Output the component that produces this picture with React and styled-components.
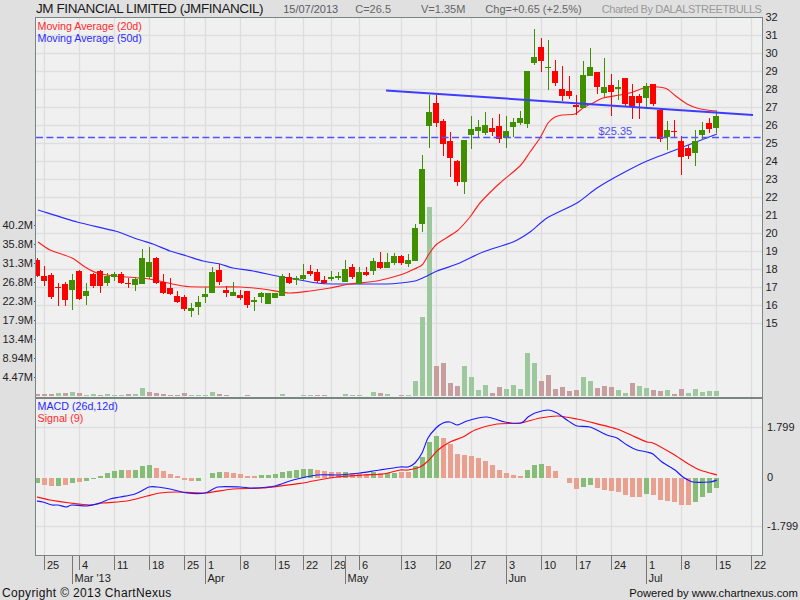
import React from "react";
import styled, { createGlobalStyle } from "styled-components";

const Global = createGlobalStyle`
  html, body { margin: 0; padding: 0; background: #e0e0e0; }
`;

const font = `"Liberation Sans", Arial, sans-serif`;
const GREEN = "#3f8f00";
const RED = "#ff0000";

/* [high, bodyTop, bodyBottom, low, colour] in pixel rows of the picture */
const candles = [
  [258,260,276,277,"r"],[266,276,281,286,"r"],[273,275,297,299,"r"],[283,287,288,306,"r"],[282,284,300,306,"r"],
  [274,280,290,310,"g"],[270,271,299,300,"r"],[283,291,296,305,"g"],[273,274,286,288,"r"],[270,271,286,293,"r"],
  [273,276,283,286,"g"],[272,274,277,281,"g"],[272,274,283,284,"r"],[278,283,284,288,"r"],[277,279,285,291,"g"],
  [249,258,284,284,"g"],[247,262,277,279,"g"],[257,258,283,284,"r"],[274,282,293,294,"r"],[278,288,294,295,"r"],
  [291,296,302,303,"r"],[295,297,309,311,"r"],[303,308,311,317,"g"],[296,302,307,315,"g"],[287,294,297,303,"g"],
  [267,272,293,293,"g"],[264,270,282,285,"r"],[286,290,293,297,"r"],[282,292,296,296,"g"],[290,295,298,300,"r"],
  [291,291,305,308,"r"],[297,300,302,311,"g"],[292,293,297,303,"g"],[293,293,304,304,"g"],[293,293,298,298,"g"],
  [274,276,296,296,"g"],[273,277,283,284,"r"],[276,278,280,285,"g"],[264,275,279,280,"g"],[265,271,274,276,"r"],
  [269,272,281,283,"r"],[276,280,283,284,"r"],[271,277,279,281,"g"],[272,276,278,280,"g"],[260,269,282,282,"g"],
  [264,267,277,279,"r"],[267,272,284,284,"g"],[267,272,275,276,"r"],[258,261,271,275,"g"],[252,262,268,269,"r"],
  [253,262,268,268,"g"],[253,256,263,265,"g"],[255,256,263,265,"r"],[254,260,264,267,"g"],[224,228,261,261,"g"],
  [155,169,224,232,"g"],[95,112,126,148,"g"],[95,103,123,127,"r"],[119,121,144,156,"r"],[132,141,158,177,"r"],
  [160,161,182,186,"r"],[140,140,182,194,"g"],[116,129,135,149,"g"],[120,127,131,137,"g"],[112,125,133,135,"g"],
  [118,128,132,136,"r"],[114,126,139,143,"r"],[116,131,138,148,"g"],[118,122,127,137,"g"],[111,118,123,125,"g"],
  [71,71,124,128,"g"],[29,57,63,65,"g"],[38,47,61,72,"r"],[40,67,68,90,"g"],[60,71,83,86,"r"],
  [66,89,96,101,"r"],[76,91,96,99,"r"],[95,105,107,115,"r"],[61,75,108,108,"g"],[48,67,76,76,"g"],
  [72,72,87,94,"r"],[58,87,93,97,"g"],[74,85,92,116,"r"],[80,87,89,100,"g"],[78,78,104,106,"r"],
  [84,96,107,119,"r"],[94,96,103,119,"r"],[83,86,98,107,"g"],[84,84,104,106,"r"],[109,110,139,142,"r"],
  [121,130,137,150,"g"],[120,131,132,138,"r"],[136,141,157,175,"r"],[145,148,156,159,"r"],[130,141,153,166,"g"],
  [122,130,135,140,"g"],[118,123,129,133,"r"],[111,116,128,133,"g"],
];

/* volume bar height in px, colour */
const volumes = "2r 2r 2r 3g 3r 4g 3r 1g 2g 1r 2g 1g 1g 2r 2g 8g 4r 3r 2r 1r 1r 3r 1g 1g 1g 4g 2r 1r 0g 0g 1r 0g 0g 0g 0g 2g 0g 0g 1g 1g 1r 1r 0g 0g 2g 1g 1g 0g 4g 3r 2g 0g 1r 1g 15g 79g 189g 30r 33r 13r 10r 30g 19g 6g 11g 3r 9r 7g 11g 7g 43g 33g 15r 21r 7r 9r 5r 6r 19g 15g 8r 10r 9r 6g 3g 13r 10g 8g 6r 5r 6g 2r 7r 3g 7g 4g 5g 5g"
  .split(" ").map((s) => [parseInt(s, 10), s.slice(-1)]);

/* MACD histogram height in px above the zero line, colour */
const histogram = "-5g -7r -8r -8g -7r -5g -4r -3g -1g 2g 5g 7g 8g 8r 8g 12g 13g 10r 7r 4r 2r -2r -3r -3g 0.5g 5g 6g 6r 5r 4r 2.5r 2.5r 3.5g 3g 4g 6g 7g 8g 9g 9g 8r 7r 6r 6r 6g 5r 5r 4r 6g 5r 5g 5g 6r 6r 12g 21g 36g 42g 40r 34r 24r 23r 22r 20r 17r 13r 8r 5r 3r 2r 8g 13g 14g 12r 7r 0.5r -5r -11r -9g -7g -10r -12r -13r -14r -17r -19r -19r -16g -17r -22r -23r -24r -27r -27r -24g -19g -15g -10g"
  .split(" ").map((s) => [parseFloat(s), s.slice(-1)]);

const ma20 = "38,242 50,250 72,258 85,267 97,273 115,276 149,279 183,286 203,287 240,287 263,289 289,293 310,291 330,288 350,284 377,281 400,275 410,271 422,265 429,254 437,244 457,231 470,217 480,203 500,183 520,166 530,152 540,138 548,123 555,117 562,115 575,114 583,108 593,103 603,98 620,95 633,92 647,87 658,87 667,89 677,97 687,104 697,108 707,110 717,111";
const ma50 = "38,210 77,222 115,231 137,239 153,244 170,251 187,256 203,261 220,264 233,268 253,271 277,276 300,280 317,283 333,284 360,284 387,284 400,283 415,281 427,276 437,271 457,264 483,252 513,242 530,232 547,218 577,203 597,188 623,173 647,161 683,147 717,134";
const macd = "37,501 43,502 52,505 58,505 66,507 72,505 87,506 100,503 110,499 120,497 135,494 149,487 157,487 170,489 187,493 205,493 218,487 240,487 253,488 275,486 293,480 317,475 338,475 360,473 373,471 380,470 400,467 408,467 415,463 422,453 428,438 436,428 443,423 450,422 457,425 467,421 478,418 487,417 495,419 505,422 521,423 528,417 535,413 548,410 557,413 567,420 577,426 590,427 607,435 617,438 627,445 637,450 647,452 653,454 662,462 675,470 683,477 693,482 710,482 717,480";
const signal = "37,497 50,500 70,503 90,505 103,503 127,501 147,496 160,493 177,492 205,493 233,489 263,488 303,483 313,481 337,477 363,475 383,474 400,470 408,470 420,467 428,461 438,450 450,442 463,437 475,430 497,424 520,423 540,418 558,416 577,419 590,422 617,429 633,436 647,442 653,443 673,454 687,463 700,470 717,475";

/* Catmull-Rom through the read points, so the averages bend as smoothly as in the chart */
const smooth = (text) => {
  const p = text.split(" ").map((s) => s.split(",").map(Number));
  let d = `M${p[0][0]} ${p[0][1]}`;
  for (let i = 0; i < p.length - 1; i++) {
    const a = p[Math.max(i - 1, 0)], b = p[i], c = p[i + 1], e = p[Math.min(i + 2, p.length - 1)];
    const k = 0.12;
    d += `C${(b[0] + (c[0] - a[0]) * k).toFixed(1)} ${(b[1] + (c[1] - a[1]) * k).toFixed(1)} ${(c[0] - (e[0] - b[0]) * k).toFixed(1)} ${(c[1] - (e[1] - b[1]) * k).toFixed(1)} ${c[0]} ${c[1]}`;
  }
  return d;
};

const gridX = [44,79,114,149,184,205,240,275,303,331,359,401,436,471,506,541,576,611,646,681,716,751];
const priceGridY = Array.from({ length: 17 }, (_, i) => 35 + i * 18);

const days = [
  [44,"25"],[79,"4"],[114,"11"],[149,"18"],[184,"25"],[205,"1"],[240,"8"],[275,"15"],[303,"22"],[331,"29"],[359,"6"],
  [401,"13"],[436,"20"],[471,"27"],[506,"3"],[541,"10"],[576,"17"],[611,"24"],[646,"1"],[681,"8"],[716,"15"],[751,"22"],
];
const months = [[72,"Mar '13"],[205,"Apr"],[345,"May"],[506,"Jun"],[646,"Jul"]];

const Page = styled.div`
  width: 800px;
  height: 600px;
  background: #e0e0e0;
  font-family: ${font};
  overflow: hidden;
  display: flex;
  flex-direction: column;
`;
const TitleBar = styled.header`
  height: 17px;
  padding-left: 36px;
  display: flex;
  align-items: center;
  white-space: nowrap;
`;
const Title = styled.span`
  font-size: 13.5px;
  color: #1a1a1a;
  letter-spacing: -0.42px;
`;
const Stat = styled.span`
  font-size: 11px;
  color: ${(p) => p.$color};
  margin-left: ${(p) => p.$gap}px;
`;
const Credit = styled(Stat)`
  letter-spacing: -0.42px;
`;
const ChartRow = styled.div`
  display: flex;
  height: 539px;
`;
const LeftAxis = styled.div`
  width: 35px;
  padding-top: 199px;
  box-sizing: border-box;
  display: flex;
  flex-direction: column;
`;
const VolumeLabel = styled.div`
  position: relative;
  height: 19px;
  line-height: 19px;
  font-size: 11px;
  color: #222;
  text-align: right;
  padding-right: 1.5px;
  white-space: nowrap;
  &::after {
    content: "";
    position: absolute;
    right: 0;
    top: 9px;
    width: 1px;
    height: 1px;
    background: #555;
  }
`;
const Panes = styled.div`
  width: 726px;
  border: 1px solid #7a8683;
  display: flex;
  flex-direction: column;
  background: #f0f0f0;
`;
const PricePane = styled.div`
  position: relative;
  height: 379px;
  border-bottom: 2px solid #7a8683;
`;
const MacdPane = styled.div`
  position: relative;
  height: 156px;
`;
const Plot = styled.svg`
  display: block;
`;
const Legend = styled.div`
  position: absolute;
  left: 2px;
  top: ${(p) => p.$top}px;
  display: flex;
  flex-direction: column;
  font-size: 10.7px;
  line-height: 12px;
`;
const LegendRow = styled.span`
  color: ${(p) => p.$color};
  white-space: nowrap;
`;
const PriceNote = styled.span`
  position: absolute;
  left: 563px;
  top: 107px;
  font-size: 11px;
  line-height: 13px;
  color: #4f4fee;
`;
const RightAxis = styled.div`
  width: 38px;
  padding-left: 3px;
  box-sizing: border-box;
  display: flex;
  flex-direction: column;
`;
const PriceScale = styled.div`
  height: 381px;
  margin-top: -9px;
  display: flex;
  flex-direction: column;
`;
const PriceLabel = styled.div`
  height: 18px;
  line-height: 18px;
  font-size: 11px;
  color: #222;
`;
const MacdScale = styled.div`
  margin-top: 14px;
  padding-left: 1.5px;
  display: flex;
  flex-direction: column;
`;
const MacdLabel = styled.div`
  height: 49.5px;
  line-height: 49.5px;
  font-size: 11px;
  color: #222;
  white-space: nowrap;
`;
const TimeAxis = styled.div`
  position: relative;
  height: 28px;
`;
const DayMark = styled.span`
  position: absolute;
  top: 0;
  height: 14px;
  padding-left: 2px;
  border-left: 1px solid #777;
  font-size: 11px;
  line-height: 18px;
  color: #222;
  white-space: nowrap;
`;
const MonthMark = styled.span`
  position: absolute;
  top: 0;
  height: 28px;
  padding: 15px 0 0 1.5px;
  box-sizing: border-box;
  border-left: 1px solid #777;
  font-size: 11px;
  line-height: 14px;
  color: #222;
  white-space: nowrap;
`;
const Footer = styled.footer`
  height: 16px;
  padding: 1px 2px 0;
  box-sizing: border-box;
  display: flex;
  justify-content: space-between;
  align-items: center;
  color: #111;
`;
const Copyright = styled.span`
  font-size: 12px;
  letter-spacing: 0.35px;
`;
const Powered = styled.span`
  font-size: 11.25px;
`;

const Grid = ({ rows, top, bottom }) => (
  <g stroke="#dedede" strokeWidth="1.4">
    {gridX.map((x) => <line key={x} x1={x + 0.5} x2={x + 0.5} y1={top} y2={bottom} />)}
    {rows.map((y) => <line key={y} x1="36" x2="762" y1={y + 0.5} y2={y + 0.5} />)}
  </g>
);

const Curve = ({ points, color, width = 1.15 }) => (
  <path d={smooth(points)} fill="none" stroke={color} strokeWidth={width} strokeLinejoin="round" />
);

const centre = (i) => 37 + 7 * i;

const PriceChart = () => (
  <Plot width="726" height="379" viewBox="36 18 726 379">
    <Grid rows={priceGridY} top={18} bottom={397} />
    <g shapeRendering="crispEdges">
      {volumes.map(([h, c], i) => h > 0 && (
        <rect key={i} x={centre(i) - 2} y={396 - h} width="5" height={h} fill={c === "g" ? "#9dc79d" : "#c69e9e"} />
      ))}
    </g>
    <Curve points={ma50} color="#2a2aff" />
    <Curve points={ma20} color="#ff2020" />
    <g shapeRendering="crispEdges">
      {candles.map(([hi, top, bot, lo, c], i) => (
        <g key={i} fill={c === "g" ? GREEN : RED}>
          <rect x={centre(i)} y={hi} width="1" height={lo - hi} />
          <rect x={centre(i) - 3} y={top} width="6" height={Math.max(bot - top, 1)} />
        </g>
      ))}
    </g>
    <line x1="36" x2="762" y1="137.5" y2="137.5" stroke="#5252ff" strokeWidth="1.7" strokeDasharray="7 3.4" />
    <line x1="386" y1="90.5" x2="753" y2="115" stroke="#3d3dff" strokeWidth="2" />
  </Plot>
);

const MacdChart = () => (
  <Plot width="726" height="156" viewBox="36 399 726 156">
    <Grid rows={[427, 526]} top={399} bottom={555} />
    <g shapeRendering="crispEdges">
      {histogram.map(([h, c], i) => (
        <rect
          key={i}
          x={centre(i) - 2}
          y={h >= 0 ? 478 - h : 478}
          width="5"
          height={Math.abs(h)}
          fill={c === "g" ? "#86bd76" : "#e9a08e"}
        />
      ))}
    </g>
    <Curve points={signal} color="#ff1010" />
    <Curve points={macd} color="#1a1aff" />
  </Plot>
);

export default function App() {
  return (
    <Page>
      <Global />
      <TitleBar>
        <Title>JM FINANCIAL LIMITED (JMFINANCIL)</Title>
        <Stat $color="#5a5a66" $gap={20}>15/07/2013</Stat>
        <Stat $color="#666" $gap={17}>C=26.5</Stat>
        <Stat $color="#666" $gap={30}>V=1.35M</Stat>
        <Stat $color="#666" $gap={20}>Chg=+0.65 (+2.5%)</Stat>
        <Credit $color="#999" $gap={20}>Charted By DALALSTREETBULLS</Credit>
      </TitleBar>
      <ChartRow>
        <LeftAxis>
          {["40.2M","35.8M","31.3M","26.8M","22.3M","17.9M","13.4M","8.94M","4.47M"].map((v) => (
            <VolumeLabel key={v}>{v}</VolumeLabel>
          ))}
        </LeftAxis>
        <Panes>
          <PricePane>
            <PriceChart />
            <Legend $top={2}>
              <LegendRow $color="#ff2a2a">Moving Average (20d)</LegendRow>
              <LegendRow $color="#2a2aff">Moving Average (50d)</LegendRow>
            </Legend>
            <PriceNote>$25.35</PriceNote>
          </PricePane>
          <MacdPane>
            <MacdChart />
            <Legend $top={1}>
              <LegendRow $color="#2a2aff">MACD (26d,12d)</LegendRow>
              <LegendRow $color="#ff2a2a">Signal (9)</LegendRow>
            </Legend>
          </MacdPane>
        </Panes>
        <RightAxis>
          <PriceScale>
            {Array.from({ length: 18 }, (_, i) => 32 - i).map((p) => (
              <PriceLabel key={p}>{p}</PriceLabel>
            ))}
          </PriceScale>
          <MacdScale>
            <MacdLabel>1.799</MacdLabel>
            <MacdLabel>0</MacdLabel>
            <MacdLabel>-1.799</MacdLabel>
          </MacdScale>
        </RightAxis>
      </ChartRow>
      <TimeAxis>
        {days.map(([x, d]) => <DayMark key={x} style={{ left: x }}>{d}</DayMark>)}
        {months.map(([x, m]) => <MonthMark key={x} style={{ left: x }}>{m}</MonthMark>)}
      </TimeAxis>
      <Footer>
        <Copyright>Copyright © 2013 ChartNexus</Copyright>
        <Powered>Powered by www.chartnexus.com</Powered>
      </Footer>
    </Page>
  );
}
